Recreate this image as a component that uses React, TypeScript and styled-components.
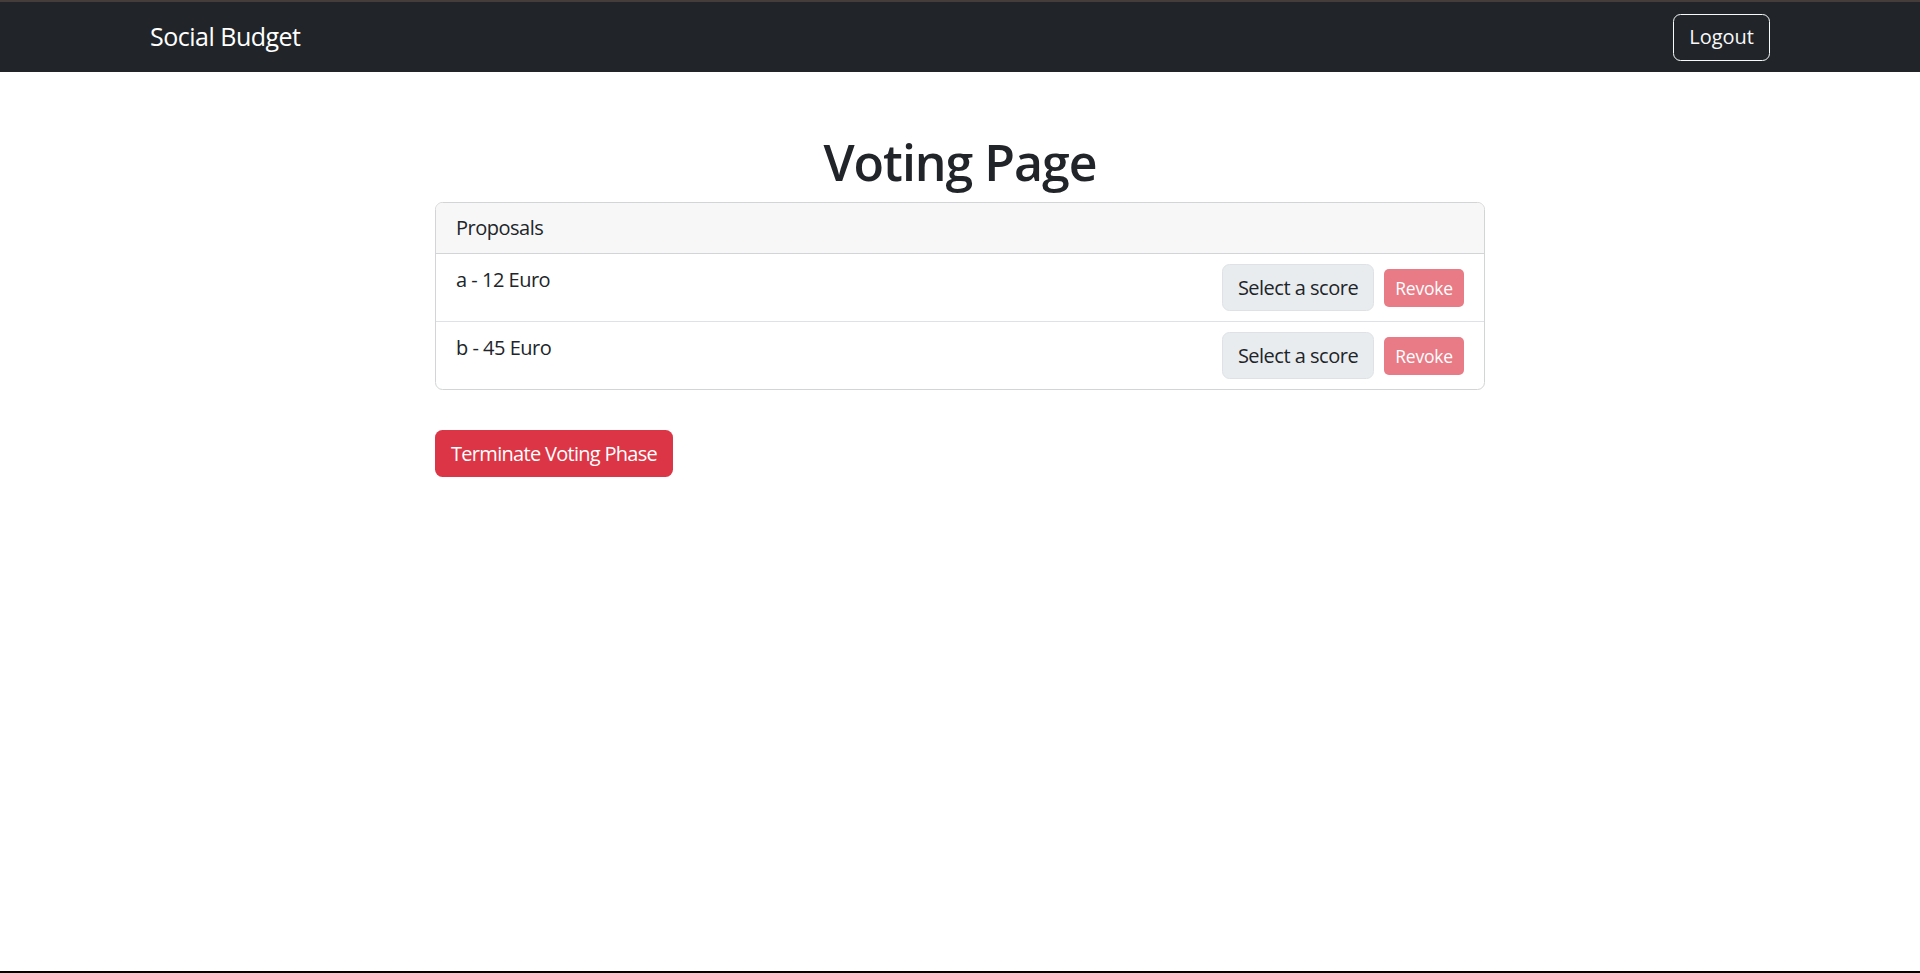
import styled, { createGlobalStyle } from "styled-components";

const GlobalStyle = createGlobalStyle`
  html, body {
    margin: 0;
    padding: 0;
    background: #ffffff;
  }
  body {
    font-family: "Open Sans", "Noto Sans", sans-serif;
    font-size: 20px;
    line-height: 1.5;
    letter-spacing: -0.025em;
    color: #212529;
  }
  * {
    box-sizing: border-box;
  }
`;

interface Proposal {
  id: number;
  description: string;
  cost: number;
}

const proposals: Proposal[] = [
  { id: 1, description: "a", cost: 12 },
  { id: 2, description: "b", cost: 45 },
];

export default function App() {
  return (
    <>
      <GlobalStyle />
      <Page>
        <Navbar>
          <NavContainer>
            <Brand href="#">Social Budget</Brand>
            <LogoutButton>Logout</LogoutButton>
          </NavContainer>
        </Navbar>
        <Main>
          <Title>Voting Page</Title>
          <Card>
            <CardHeader>Proposals</CardHeader>
            <List>
              {proposals.map((p) => (
                <ListItem key={p.id}>
                  <ProposalText>
                    {p.description} - {p.cost} Euro
                  </ProposalText>
                  <Actions>
                    <ScoreButton>Select a score</ScoreButton>
                    <RevokeButton disabled>Revoke</RevokeButton>
                  </Actions>
                </ListItem>
              ))}
            </List>
          </Card>
          <TerminateButton>Terminate Voting Phase</TerminateButton>
        </Main>
      </Page>
    </>
  );
}

const Page = styled.div`
  min-height: 100vh;
  border-top: 2px solid #453d39;
  border-bottom: 2px solid #000000;
  display: flex;
  flex-direction: column;
`;

const Navbar = styled.nav`
  background: #212529;
  height: 70px;
  display: flex;
  align-items: center;
`;

const NavContainer = styled.div`
  width: 100%;
  padding: 0 150px;
  display: flex;
  justify-content: space-between;
  align-items: center;
`;

const Brand = styled.a`
  color: #ffffff;
  font-size: 25px;
  line-height: 1.5;
  text-decoration: none;
`;

const BaseButton = styled.button`
  font-family: inherit;
  font-size: 20px;
  line-height: 30px;
  letter-spacing: inherit;
  padding: 7.5px 15px;
  border-radius: 7.5px;
  border: 1px solid transparent;
  cursor: pointer;
`;

const LogoutButton = styled(BaseButton)`
  background: transparent;
  color: #f8f9fa;
  border-color: #f8f9fa;
  letter-spacing: 0;
`;

const Main = styled.main`
  width: 1050px;
  margin: 60px auto 0;
  display: flex;
  flex-direction: column;
  align-items: flex-start;
`;

const Title = styled.h1`
  align-self: stretch;
  text-align: center;
  font-size: 50px;
  font-weight: 600;
  line-height: 1.2;
  letter-spacing: -0.02em;
  margin: 0 0 10px;
`;

const Card = styled.div`
  align-self: stretch;
  border: 1px solid #d3d4d5;
  border-radius: 7.5px;
  overflow: hidden;
`;

const CardHeader = styled.div`
  background: #f7f7f7;
  padding: 10px 20px;
  border-bottom: 1px solid #d3d4d5;
`;

const List = styled.ul`
  list-style: none;
  margin: 0;
  padding: 0;
`;

const ListItem = styled.li`
  display: flex;
  justify-content: space-between;
  align-items: flex-start;
  padding: 10px 20px;
  border-bottom: 1px solid #dee2e6;

  &:last-child {
    border-bottom: none;
  }
`;

const ProposalText = styled.span`
  padding-top: 1px;
`;

const Actions = styled.div`
  display: flex;
  align-items: baseline;
  gap: 10px;
`;

const ScoreButton = styled(BaseButton)`
  background: #e9ecef;
  border-color: #dee2e6;
  color: #212529;
`;

const RevokeButton = styled(BaseButton)`
  background: #dc3545;
  color: #ffffff;
  font-size: 17.5px;
  line-height: 26.25px;
  padding: 5px 10px;
  border-radius: 5px;
  letter-spacing: -0.01em;
  opacity: 0.65;
  cursor: default;
`;

const TerminateButton = styled(BaseButton)`
  margin-top: 40px;
  background: #dc3545;
  color: #ffffff;
  letter-spacing: -0.035em;
`;
